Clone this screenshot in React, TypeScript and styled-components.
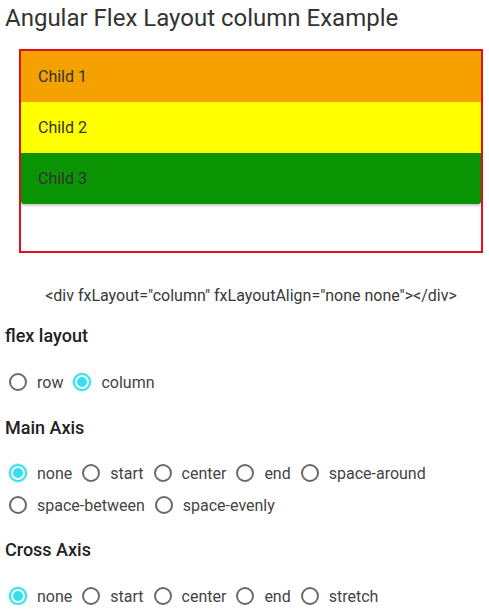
import React, { useState } from "react";
import styled, { createGlobalStyle } from "styled-components";

const Global = createGlobalStyle`
  html, body { margin: 0; padding: 0; background: #ffffff; }
  body { font-family: Roboto, "Noto Sans", Arial, sans-serif; color: #333; }
`;

const Page = styled.div`
  width: 489px;
  display: flex;
  flex-direction: column;
`;

const Title = styled.h1`
  margin: 0;
  padding: 4px 0 0 5px;
  height: 45px;
  box-sizing: border-box;
  font-size: 24px;
  font-weight: 400;
  line-height: 28px;
  color: #333;
`;

const Demo = styled.div`
  margin: 4px 6px 0 19px;
  height: 204px;
  box-sizing: border-box;
  border: 2px solid #e0101f;
  display: flex;
  flex-direction: column;
`;

const Child = styled.div<{ $bg: string; $last?: boolean }>`
  height: 51px;
  flex: none;
  display: flex;
  align-items: center;
  padding-left: 17px;
  background: ${(p) => p.$bg};
  font-size: 16px;
  color: #333;
  border-radius: ${(p) => (p.$last ? "0 0 3px 3px" : "0")};
  box-shadow: ${(p) => (p.$last ? "0 2px 2px rgba(0,0,0,0.2)" : "none")};
`;

const Code = styled.div`
  margin: 34px 6px 0 19px;
  text-align: center;
  font-size: 16px;
  line-height: 18px;
  color: #383838;
`;

const Heading = styled.h3<{ $top: number }>`
  margin: ${(p) => p.$top}px 0 0 5px;
  font-size: 18px;
  font-weight: 500;
  line-height: 20px;
  color: #222;
`;

const Group = styled.div<{ $top: number }>`
  margin-top: ${(p) => p.$top}px;
  padding-left: 9px;
  display: flex;
  flex-wrap: wrap;
  row-gap: 14px;
`;

const Option = styled.label`
  display: flex;
  align-items: center;
  height: 18px;
  margin-right: 10px;
  font-size: 16px;
  color: #444;
  cursor: pointer;
`;

const Circle = styled.span<{ $on: boolean }>`
  width: 18px;
  height: 18px;
  box-sizing: border-box;
  border-radius: 50%;
  border: 2px solid ${(p) => (p.$on ? "#33dff2" : "#6b6b6b")};
  margin-right: 10px;
  display: flex;
  align-items: center;
  justify-content: center;
  box-shadow: ${(p) => (p.$on ? "0 0 0 1px rgba(51,223,242,0.35)" : "none")};
  &::after {
    content: "";
    width: 10px;
    height: 10px;
    border-radius: 50%;
    background: #33dff2;
    display: ${(p) => (p.$on ? "block" : "none")};
  }
`;

function Radios({ options, value, onChange, top }: { options: string[]; value: string; onChange: (v: string) => void; top: number }) {
  return (
    <Group $top={top}>
      {options.map((o) => (
        <Option key={o} onClick={() => onChange(o)}>
          <Circle $on={o === value} />
          {o}
        </Option>
      ))}
    </Group>
  );
}

export default function App() {
  const [layout, setLayout] = useState("column");
  const [main, setMain] = useState("none");
  const [cross, setCross] = useState("none");
  return (
    <Page>
      <Global />
      <Title>Angular Flex Layout column Example</Title>
      <Demo>
        <Child $bg="#f5a200">Child 1</Child>
        <Child $bg="#ffff00">Child 2</Child>
        <Child $bg="#0a9404" $last>Child 3</Child>
      </Demo>
      <Code>{`<div fxLayout="${layout}" fxLayoutAlign="${main} ${cross}"></div>`}</Code>
      <Heading $top={21}>flex layout</Heading>
      <Radios top={27} options={["row", "column"]} value={layout} onChange={setLayout} />
      <Heading $top={27}>Main Axis</Heading>
      <Radios top={26} options={["none", "start", "center", "end", "space-around", "space-between", "space-evenly"]} value={main} onChange={setMain} />
      <Heading $top={26}>Cross Axis</Heading>
      <Radios top={27} options={["none", "start", "center", "end", "stretch"]} value={cross} onChange={setCross} />
    </Page>
  );
}
